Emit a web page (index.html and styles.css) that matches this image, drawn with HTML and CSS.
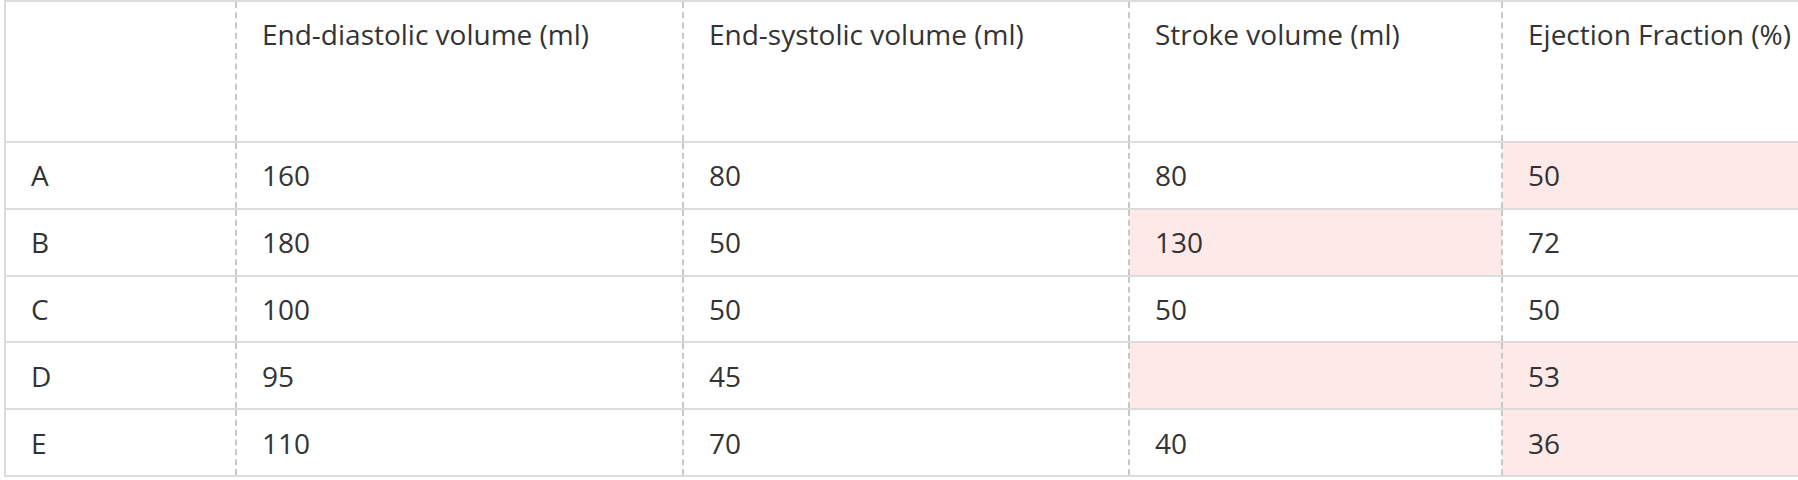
FILE: index.html
```html
<!DOCTYPE html>
<html>
<head>
<meta charset="utf-8">
<link rel="stylesheet" href="styles.css">
</head>
<body>
<div class="wrap">
<table class="grid">
  <colgroup>
    <col class="c1"><col class="c2"><col class="c3"><col class="c4"><col class="c5">
  </colgroup>
  <thead>
    <tr>
      <th></th>
      <th>End-diastolic volume (ml)</th>
      <th>End-systolic volume (ml)</th>
      <th>Stroke volume (ml)</th>
      <th>Ejection Fraction (%)</th>
    </tr>
  </thead>
  <tbody>
    <tr><td>A</td><td>160</td><td>80</td><td>80</td><td class="hl">50</td></tr>
    <tr><td>B</td><td>180</td><td>50</td><td class="hl">130</td><td>72</td></tr>
    <tr><td>C</td><td>100</td><td>50</td><td>50</td><td>50</td></tr>
    <tr><td>D</td><td>95</td><td>45</td><td class="hl"></td><td class="hl">53</td></tr>
    <tr><td>E</td><td>110</td><td>70</td><td>40</td><td class="hl">36</td></tr>
  </tbody>
</table>
</div>
</body>
</html>
```

FILE: styles.css
```css
html, body {
  margin: 0;
  padding: 0;
  background: #fff;
  overflow: hidden;
}
.wrap {
  padding-left: 4px;
  width: 2000px;
}
.grid {
  border-collapse: collapse;
  table-layout: fixed;
  width: 1870px;
  font-family: "Open Sans", "Noto Sans", sans-serif;
  font-size: 28px;
  color: #333;
  border-top: 2px solid #dcdcdc;
  border-left: 2px solid #dcdcdc;
  border-bottom: 2px solid #dcdcdc;
}
.c1 { width: 231px; }
.c2 { width: 447px; }
.c3 { width: 446px; }
.c4 { width: 373px; }
.c5 { width: 373px; }
.grid th {
  height: 141px;
  box-sizing: border-box;
  text-align: left;
  vertical-align: top;
  font-weight: 400;
  padding: 13px 24px 0 25px;
  white-space: nowrap;
}
.grid td {
  height: 64.8px;
  padding: 0 24px 0 25px;
  vertical-align: middle;
  white-space: nowrap;
}
.grid tr {
  border-bottom: 2px solid #dcdcdc;
}
.grid th + th,
.grid td + td {
  border-left: 2px dashed #c8c8c8;
}
.grid td.hl {
  background: #fde9e7;
}
```
